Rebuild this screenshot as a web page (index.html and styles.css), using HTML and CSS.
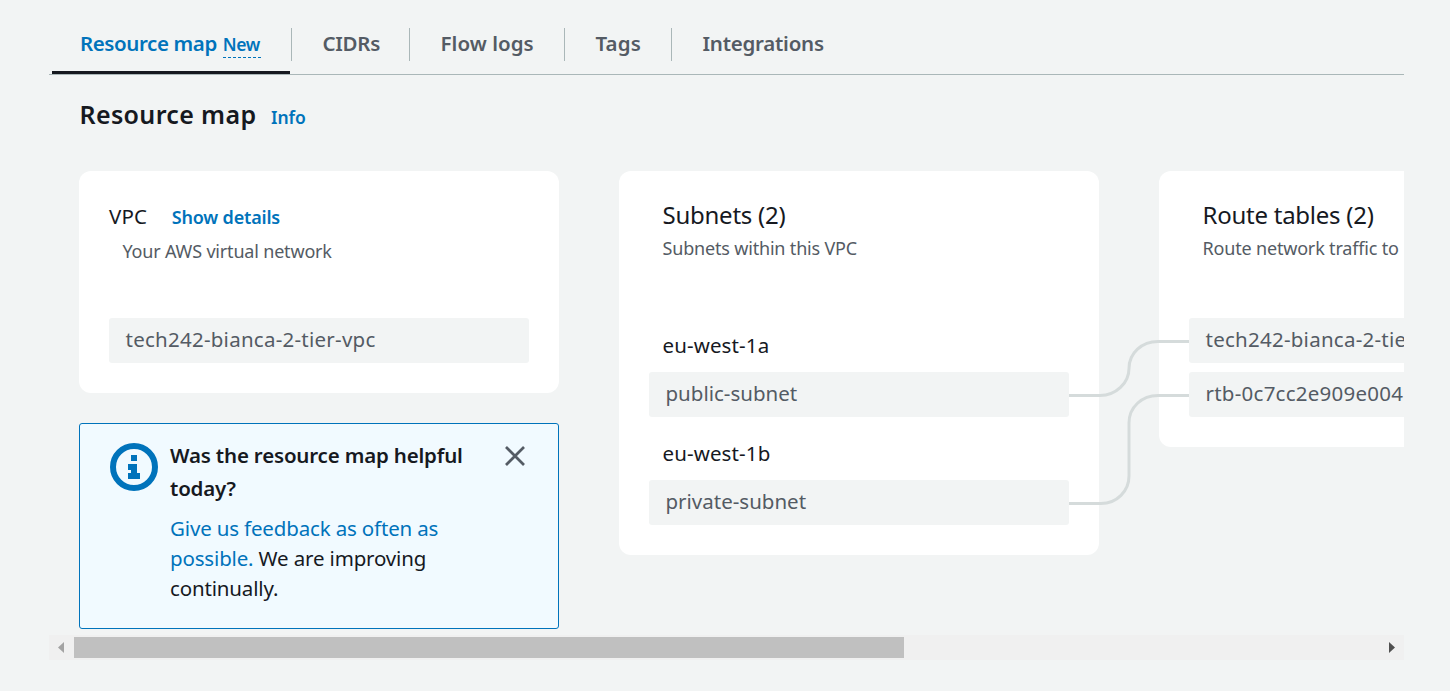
FILE: index.html
```html
<!DOCTYPE html>
<html lang="en">
<head>
<meta charset="utf-8">
<title>Resource map</title>
<link rel="stylesheet" href="styles.css">
</head>
<body>
<main class="panel">
  <nav class="tabs">
    <a class="tab tab-map active"><span class="tab-label">Resource map</span><span class="new">New</span></a>
    <a class="tab tab-cidrs">CIDRs</a>
    <a class="tab tab-logs">Flow logs</a>
    <a class="tab tab-tags">Tags</a>
    <a class="tab tab-integrations">Integrations</a>
  </nav>

  <header class="heading">
    <h2>Resource map</h2>
    <a class="info">Info</a>
  </header>

  <section class="map">
    <div class="column">
      <article class="card">
        <div class="vpc-head"><span class="vpc-title">VPC</span><a class="details">Show details</a></div>
        <p class="sub vpc-sub">Your AWS virtual network</p>
        <div class="chips"><div class="chip code">tech242-bianca-2-tier-vpc</div></div>
      </article>
      <aside class="alert">
        <svg class="alert-icon" width="48" height="48" viewBox="0 0 48 48">
          <circle cx="24" cy="24" r="21" fill="none" stroke="#0073bb" stroke-width="6"/>
          <path d="M21 12h6v6h-6zM18 21h9v9h3v6H18v-6h3v-3h-3z" fill="#0073bb"/>
        </svg>
        <div class="alert-text">
          <h3>Was the resource map helpful today?</h3>
          <p><a>Give us feedback as often as possible.</a> We are improving continually.</p>
        </div>
        <svg class="close" width="20" height="20" viewBox="0 0 20 20">
          <path d="M1 1l18 18M19 1L1 19" fill="none" stroke="#545b64" stroke-width="2.7"/>
        </svg>
      </aside>
    </div>

    <article class="card">
      <h3 class="title">Subnets (2)</h3>
      <p class="sub">Subnets within this VPC</p>
      <div class="zones">
        <div class="zone">eu-west-1a</div>
        <div class="chip">public-subnet</div>
        <div class="zone">eu-west-1b</div>
        <div class="chip">private-subnet</div>
      </div>
    </article>

    <article class="card">
      <h3 class="title">Route tables (2)</h3>
      <p class="sub route-sub">Route network traffic to</p>
      <div class="chips route-chips">
        <div class="chip code">tech242-bianca-2-tie</div>
        <div class="chip code">rtb-0c7cc2e909e004</div>
      </div>
    </article>

    <svg class="links" width="120" height="170" viewBox="0 0 120 170">
      <g fill="none" stroke="#d5dbdb" stroke-width="3">
        <path d="M0 60.5H31C47 60.5 60 48 60 33.5C60 18 73 6.500 89 6.500H120"/>
        <path d="M0 168.500H32C48 168.500 60 156 60 141V88C60 72 73 60.500 89 60.500H120"/>
      </g>
    </svg>
  </section>

  <div class="scrollbar">
    <svg class="arrow" width="25" height="25" viewBox="0 0 25 25"><path d="M15 7v11L9 12.500z" fill="#a3a3a3"/></svg>
    <div class="thumb"></div>
    <svg class="arrow" width="25" height="25" viewBox="0 0 25 25"><path d="M10 7v11l6-5.500z" fill="#505050"/></svg>
  </div>
</main>
</body>
</html>
```
FILE: styles.css
```css
* { box-sizing: border-box; }

body {
  margin: 0;
  background: #f2f4f4;
  color: #16191f;
  font-family: "Noto Sans", "Open Sans", sans-serif;
  font-size: 20.5px;
  line-height: 30px;
}

h2, h3, p { margin: 0; font-weight: 400; }
a { color: #0073bb; }

.panel {
  width: 1355px;
  margin-left: 49px;
  padding-top: 28px;
}

/* Tabs */
.tabs {
  display: flex;
  height: 47px;
  padding-left: 3px;
  border-bottom: 1px solid #aab7b8;
}
.tab {
  height: 33px;
  padding-left: 30.5px;
  border-left: 1px solid #aab7b8;
  color: #545b64;
  font-weight: 600;
  white-space: nowrap;
}
.tab-map {
  width: 239px;
  height: 46px;
  padding-left: 28px;
  border-left: 0;
  color: #0073bb;
  background: linear-gradient(#16191f, #16191f) 0 100% / 238px 3px no-repeat;
}
.tab-label { letter-spacing: -0.4px; }
.tab-cidrs { width: 118px; letter-spacing: -0.3px; }
.tab-logs { width: 155px; letter-spacing: 0.05px; }
.tab-tags { width: 107px; letter-spacing: 0.1px; }
.tab-integrations { letter-spacing: -0.25px; }
.new {
  display: inline-block;
  margin-left: 6px;
  height: 29px;
  padding-right: 1px;
  border-bottom: 1px dashed #0073bb;
  font-size: 17.5px;
  letter-spacing: -0.4px;
}

/* Section heading */
.heading {
  display: flex;
  align-items: baseline;
  gap: 14.5px;
  height: 96px;
  padding: 21px 0 0 30.5px;
}
.heading h2 {
  font-size: 25px;
  line-height: 36px;
  font-weight: 600;
  letter-spacing: 0.35px;
}
.info { font-size: 17.5px; font-weight: 600; }

/* Map */
.map {
  position: relative;
  display: flex;
  align-items: flex-start;
  gap: 60px;
  height: 464px;
  padding-left: 30px;
  overflow: hidden;
}
.column { display: flex; flex-direction: column; gap: 30px; }
.card {
  flex: none;
  width: 480px;
  padding: 30px;
  background: #fff;
  border-radius: 12px;
}
.vpc-head {
  display: flex;
  align-items: baseline;
  gap: 24.500px;
  height: 35px;
}
.vpc-title { letter-spacing: 0.2px; }
.details { font-size: 18px; font-weight: 600; letter-spacing: -0.18px; }
.title {
  height: 30px;
  margin-top: -1px;
  padding-left: 13.5px;
  font-size: 24px;
  letter-spacing: -0.25px;
}
.sub {
  height: 24px;
  padding-left: 13.5px;
  color: #545b64;
  font-size: 18px;
  line-height: 24px;
  letter-spacing: -0.18px;
  white-space: nowrap;
}
.title + .sub { margin-top: 6px; }
.vpc-sub { margin-top: 3px; }
.chips { display: flex; flex-direction: column; gap: 9px; margin-top: 55px; }
.route-chips { margin-top: 58px; }
.chip {
  height: 45px;
  padding: 6px 0 0 16.5px;
  background: #f2f4f4;
  border-radius: 3px;
  color: #545b64;
  white-space: nowrap;
}
.code { letter-spacing: 0.25px; }
.zones { margin-top: 70px; }
.zone {
  height: 42px;
  padding-left: 13.5px;
  letter-spacing: 0.12px;
}
.zone + .chip + .zone { height: 63px; padding-top: 21px; }
.links { position: absolute; left: 1020px; top: 164px; }

/* Feedback notice */
.alert {
  display: flex;
  align-items: flex-start;
  width: 480px;
  height: 206px;
  padding: 15px 0 0 30px;
  background: #f1faff;
  border: 1px solid #0073bb;
  border-radius: 3px;
}
.alert-icon { margin: 4px 12px 0 0; }
.alert-text { width: 304px; }
.alert h3 { font-size: 20.5px; font-weight: 600; line-height: 33px; letter-spacing: -0.18px; }
.alert p { margin-top: 8px; letter-spacing: -0.16px; }
.close { margin: 7px 0 0 31px; }

/* Horizontal scrollbar */
.scrollbar {
  display: flex;
  align-items: center;
  height: 25px;
  background: #f0f0f0;
}
.arrow { flex: none; }
.thumb { width: 830px; height: 21px; margin-right: auto; background: #c0c0c0; }
```
